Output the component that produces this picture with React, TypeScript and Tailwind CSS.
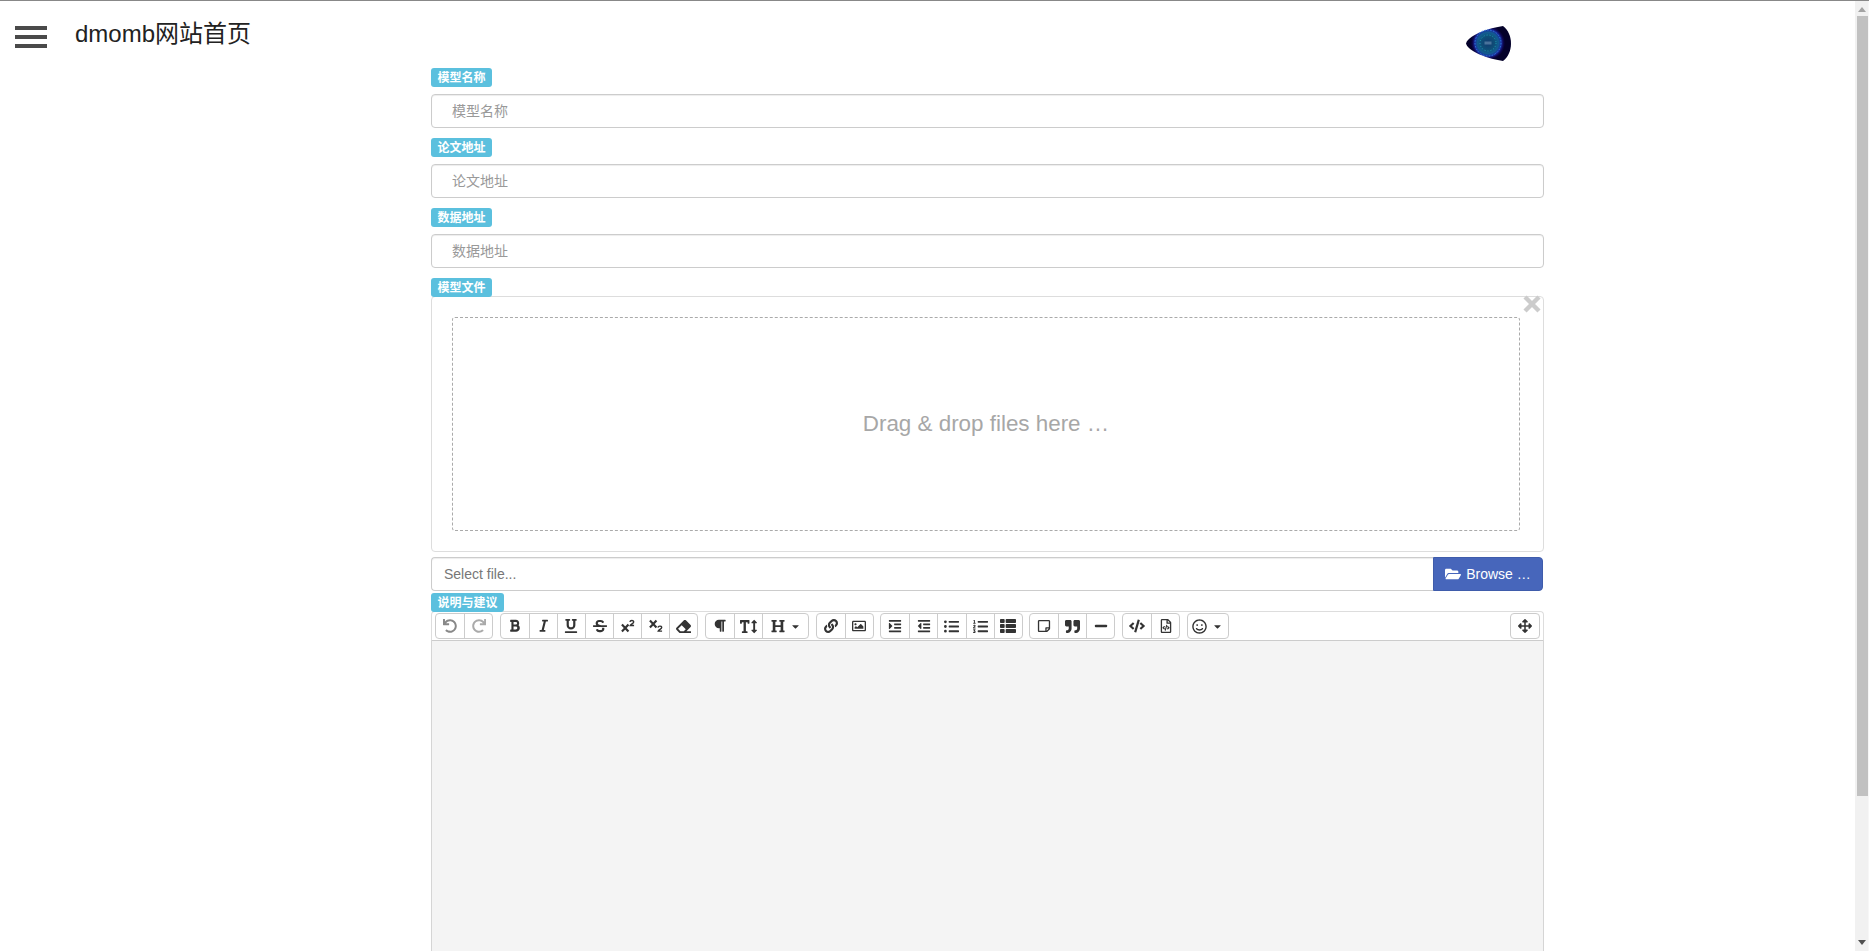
import React from "react";
import {
  FaUndo, FaRedo, FaBold, FaItalic, FaUnderline, FaStrikethrough, FaEraser,
  FaParagraph, FaTextHeight, FaHeading, FaCaretDown, FaLink, FaRegImage, FaIndent, FaOutdent, FaListUl,
  FaListOl, FaThList, FaRegStickyNote, FaQuoteRight, FaMinus, FaCode, FaRegFileCode, FaRegSmile,
  FaArrowsAlt, FaFolderOpen,
} from "react-icons/fa";

const font = "font-['Liberation_Sans','Noto_Sans_CJK_SC',sans-serif]";

function Sup({ size = 15, color = "#333" }: any) {
  return (
    <svg width={size} height={size} viewBox="0 0 15 15" fill="none" stroke={color}>
      <path d="M1 6L8 13.5M8 6L1 13.5" strokeWidth="2.3" />
      <path d="M9.6 3.2C9.8 1.2 13.6 1 13.6 3.1C13.6 4.6 10.6 5.4 9.9 7H14" strokeWidth="1.5" />
    </svg>
  );
}

function Sub({ size = 15, color = "#333" }: any) {
  return (
    <svg width={size} height={size} viewBox="0 0 15 15" fill="none" stroke={color}>
      <path d="M1 1.5L8 9M8 1.5L1 9" strokeWidth="2.3" />
      <path d="M9.6 9.2C9.8 7.2 13.6 7 13.6 9.1C13.6 10.6 10.6 11.4 9.9 13H14" strokeWidth="1.5" />
    </svg>
  );
}

function Badge({ children, w = "w-[61px]" }: { children: React.ReactNode; w?: string }) {
  return (
    <div className={`relative z-10 flex h-[19px] ${w} items-center justify-center rounded-[3px] bg-[#5bc0de] text-[12px] font-bold leading-none text-white`}>
      {children}
    </div>
  );
}

function Field({ label }: { label: string }) {
  return (
    <div className="mb-[10px]">
      <Badge>{label}</Badge>
      <input
        readOnly
        placeholder={label}
        className="mt-[7px] block h-[34px] w-full rounded-[4px] border border-[#ccc] bg-white px-[20px] text-[14px] shadow-[inset_0_1px_1px_rgba(0,0,0,0.075)] outline-none placeholder:text-[#999]"
      />
    </div>
  );
}

function Btn({ icon: Icon, size = 14, color = "#333", w = "w-[28.1px]", caret = false, first = false }: any) {
  return (
    <span className={`flex h-full ${w} items-center justify-center gap-[5px] ${first ? "" : "border-l border-[#ccc]"}`}>
      <Icon size={size} color={color} />
      {caret && <FaCaretDown size={11} color="#333" />}
    </span>
  );
}

function Group({ items }: { items: any[] }) {
  return (
    <div className="flex h-[26px] rounded-[4px] border border-[#ccc] bg-white">
      {items.map((it, i) => (
        <Btn key={i} first={i === 0} {...it} />
      ))}
    </div>
  );
}

function Logo() {
  return (
    <svg width="45" height="35" viewBox="0 0 45 35" className="mt-[25px]">
      <defs>
        <radialGradient id="lg" cx="22" cy="17" r="17" gradientUnits="userSpaceOnUse">
          <stop offset="0" stopColor="#123a70" />
          <stop offset="0.4" stopColor="#0e4f78" />
          <stop offset="0.62" stopColor="#125d90" />
          <stop offset="0.78" stopColor="#1a2fa0" />
          <stop offset="0.9" stopColor="#0d0650" />
          <stop offset="1" stopColor="#04012a" />
        </radialGradient>
      </defs>
      <path d="M0 17.5C1 12 16 3 37 0C42 4 45 10 45 17.5C45 25 42 31 37 35C16 32 1 23 0 17.5Z" fill="url(#lg)" />
      <circle cx="22" cy="17" r="13" fill="none" stroke="#2f7be0" strokeWidth="1" strokeDasharray="1.5 1.5" />
      <circle cx="22" cy="17" r="8" fill="none" stroke="#1ea0b0" strokeWidth="1" strokeDasharray="1 2" />
      <rect x="18.5" y="15.5" width="7" height="3" fill="#8fb2cc" opacity="0.45" />
    </svg>
  );
}

function Scrollbar() {
  return (
    <div className="fixed bottom-0 right-0 top-px z-20 flex w-[14px] flex-col items-center border-r border-[#f7f7f7] bg-[#f1f1f1]">
      <svg width="8" height="5" viewBox="0 0 8 5" className="mt-[6px] shrink-0">
        <path d="M4 0L8 5H0Z" fill="#a3a3a3" />
      </svg>
      <div className="ml-[1px] mt-[4px] h-[780px] w-[11px] shrink-0 bg-[#c1c1c1]" />
      <svg width="8" height="5" viewBox="0 0 8 5" className="mb-[6px] mt-auto shrink-0">
        <path d="M0 0H8L4 5Z" fill="#505050" />
      </svg>
    </div>
  );
}

export default function App() {
  return (
    <div className={`${font} min-h-[1120px] border-t border-[#888] bg-white text-[#333]`}>
      <Scrollbar />
      <header className="flex h-[67px] items-start">
        <div className="ml-[15px] mt-[25px] flex w-[32px] flex-col gap-[5px]">
          <span className="h-[4px] bg-[#4a4a4a]" />
          <span className="h-[4px] bg-[#4a4a4a]" />
          <span className="h-[4px] bg-[#4a4a4a]" />
        </div>
        <div className="ml-[28px] mt-[16px] text-[24px] leading-[34px] text-[#222]">dmomb网站首页</div>
        <div className="ml-auto mr-[358px]">
          <Logo />
        </div>
      </header>

      <main className="ml-[431px] w-[1113px]">
        <Field label="模型名称" />
        <Field label="论文地址" />
        <Field label="数据地址" />

        <Badge>模型文件</Badge>
        <div className="relative -mt-px h-[256px] rounded-[4px] border border-[#ddd] pb-[20px] pl-[20px] pr-[23px] pt-[20px]">
          <svg width="18" height="18" viewBox="0 0 18 18" className="absolute right-[2px] top-[-2px]">
            <path d="M2 2L16 16M16 2L2 16" stroke="#ccc" strokeWidth="4.4" />
          </svg>
          <div className="flex h-full items-center justify-center rounded-[3px] border border-dashed border-[#aaa] text-[22.4px] text-[#a7a7a7]">
            Drag &amp; drop files here …
          </div>
        </div>

        <div className="mt-[5px] flex h-[34px] pr-px">
          <div className="flex flex-1 items-center rounded-l-[4px] border border-r-0 border-[#ccc] pl-[12px] text-[14px] text-[#777] shadow-[inset_0_1px_1px_rgba(0,0,0,0.075)]">
            Select file...
          </div>
          <div className="flex w-[110px] items-center justify-center gap-[5px] rounded-r-[4px] border border-[#3f5cab] bg-[#4766bb] text-[14px] text-white">
            <FaFolderOpen size={16} color="#fff" />
            <span>Browse …</span>
          </div>
        </div>

        <div className="mt-[2px]">
          <Badge w="w-[73px]">说明与建议</Badge>
        </div>
        <div className="-mt-px flex h-[30px] items-center justify-between rounded-t-[4px] border border-[#ddd] border-b-[#ccc] pl-[3px] pr-[3px]">
          <div className="flex items-center gap-[6.5px]">
            <Group items={[{ icon: FaUndo, color: "#888", size: 14 }, { icon: FaRedo, color: "#aaa", size: 14 }]} />
            <Group items={[
              { icon: FaBold, size: 13.5 }, { icon: FaItalic, size: 13.5 }, { icon: FaUnderline, size: 14 },
              { icon: FaStrikethrough, size: 14 }, { icon: Sup }, { icon: Sub }, { icon: FaEraser, size: 15 },
            ]} />
            <Group items={[{ icon: FaParagraph, size: 13.5 }, { icon: FaTextHeight, size: 17 }, { icon: FaHeading, size: 14, caret: true, w: "w-[46px]" }]} />
            <Group items={[{ icon: FaLink, size: 14 }, { icon: FaRegImage, size: 14 }]} />
            <Group items={[{ icon: FaIndent, size: 14 }, { icon: FaOutdent, size: 14 }, { icon: FaListUl, size: 15 }, { icon: FaListOl, size: 15 }, { icon: FaThList, size: 16 }]} />
            <Group items={[{ icon: FaRegStickyNote, size: 14 }, { icon: FaQuoteRight, size: 15 }, { icon: FaMinus, size: 14 }]} />
            <Group items={[{ icon: FaCode, size: 16 }, { icon: FaRegFileCode, size: 14 }]} />
            <Group items={[{ icon: FaRegSmile, size: 15, caret: true, w: "w-[40px]" }]} />
          </div>
          <Group items={[{ icon: FaArrowsAlt, size: 14, first: true }]} />
        </div>
        <div className="h-[479px] border border-t-0 border-[#d5d5d5] bg-[#f4f4f4]" />
      </main>
    </div>
  );
}
